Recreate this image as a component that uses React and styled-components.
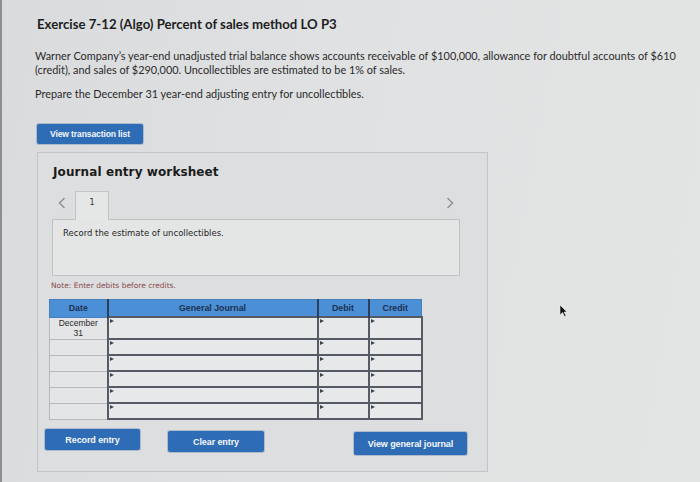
import React from "react";
import styled, { createGlobalStyle } from "styled-components";

const Global = createGlobalStyle`
  html, body { margin: 0; padding: 0; }
  body {
    width: 700px;
    height: 482px;
    overflow: hidden;
    background: linear-gradient(100deg, #d9dbdc 0%, #dfe1e2 45%, #e3e5e5 100%);
    font-family: "Lato", "Liberation Sans", sans-serif;
  }
`;

const Page = styled.div`
  position: relative;
  height: 482px;
  box-sizing: border-box;
  padding: 15px 0 0 33px;
  border-left: 2px solid #8d8f91;
`;

const Title = styled.h1`
  margin: 0 0 0 2px;
  font-family: "Lato", sans-serif;
  font-weight: 700;
  font-size: 13.2px;
  line-height: 18px;
  color: #1e1e1e;
`;

const Para = styled.p`
  margin: ${(p) => p.$top}px 0 0 0;
  width: 650px;
  font-family: "Lato", sans-serif;
  font-size: 10.9px;
  line-height: 14px;
  color: #2b2b2b;
`;

const BlueButton = styled.button`
  display: flex;
  align-items: center;
  justify-content: center;
  width: ${(p) => p.$w}px;
  height: ${(p) => p.$h || 21}px;
  margin: ${(p) => p.$m || "0"};
  padding: 0;
  border: none;
  border-radius: 2px;
  background: #2f6cb6;
  color: #f4f7fb;
  font-family: "Liberation Sans", Arial, sans-serif;
  font-weight: 700;
  font-size: ${(p) => p.$fs || 9}px;
  letter-spacing: -0.1px;
  box-shadow: 0 0 0 1px rgba(40, 80, 140, 0.25);
`;

const Panel = styled.section`
  width: 451px;
  height: 320px;
  box-sizing: border-box;
  margin: 8px 0 0 2px;
  padding: 11px 20px 0 12px;
  border: 1px solid #c3c5c6;
  background: #dcdedf;
  display: flex;
  flex-direction: column;
`;

const Heading = styled.h2`
  margin: 0 0 0 3px;
  font-family: "DejaVu Sans", Verdana, sans-serif;
  font-weight: 700;
  font-size: 12px;
  line-height: 16px;
  letter-spacing: 0.1px;
  color: #1b1b1b;
`;

const TabRow = styled.div`
  display: flex;
  align-items: flex-end;
  margin: 10px 0 0 2px;
  width: 408px;
  height: 29px;
`;

const Arrow = styled.span`
  display: flex;
  align-items: center;
  height: 22px;
  width: 14px;
  margin: ${(p) => p.$m};
  color: #8a8c8f;
  align-self: flex-start;
  margin-top: 2px;
`;

const Tab = styled.div`
  width: 34px;
  height: 29px;
  box-sizing: border-box;
  border: 1px solid #c2c4c5;
  border-bottom: none;
  background: #e5e7e7;
  display: flex;
  justify-content: center;
  padding-top: 6px;
  font-family: "DejaVu Sans", Verdana, sans-serif;
  font-size: 8px;
  color: #333;
  margin-left: 3px;
  position: relative;
  z-index: 1;
  margin-bottom: -1px;
`;

const InfoBox = styled.div`
  margin-left: 2px;
  width: 408px;
  height: 57px;
  box-sizing: border-box;
  border: 1px solid #bfc1c2;
  background: #e4e6e6;
  padding: 8px 10px;
  font-family: "DejaVu Sans", Verdana, sans-serif;
  font-size: 8.5px;
  color: #262626;
`;

const Note = styled.div`
  margin: 5px 0 0 1px;
  font-family: "DejaVu Sans", Verdana, sans-serif;
  font-size: 7.5px;
  color: #8a4b4b;
`;

const Table = styled.table`
  margin: 9px 0 0 -1px;
  border-collapse: collapse;
  table-layout: fixed;
  width: 372px;
`;

const Th = styled.th`
  height: 16px;
  padding: 0;
  background: #4b8fd6;
  border: 1px solid #4a7fbf;
  border-left: ${(p) => (p.$sep ? "2px solid #2b3f5c" : "1px solid #4a7fbf")};
  font-family: "Liberation Sans", Arial, sans-serif;
  font-size: 8.8px;
  font-weight: 700;
  color: #1c3150;
  text-align: center;
`;

const DateCell = styled.td`
  height: ${(p) => p.$h}px;
  padding: 0;
  border: 1px solid #b6b8ba;
  background: #e3e5e6;
  font-family: "Liberation Sans", Arial, sans-serif;
  font-size: 8.5px;
  line-height: 10px;
  color: #2a2a2a;
  text-align: center;
`;

const InputCell = styled.td`
  position: relative;
  height: ${(p) => p.$h}px;
  padding: 0;
  border: 2px solid #545b64;
  background: #e6e8e9;
  &::before {
    content: "";
    position: absolute;
    left: 1px;
    top: 1px;
    border-left: 4px solid #3a4450;
    border-top: 2px solid transparent;
    border-bottom: 2px solid transparent;
  }
`;

const ButtonRow = styled.div`
  display: flex;
  align-items: flex-start;
  margin: 9px 0 0 -5px;
`;

const Cursor = styled.svg`
  position: absolute;
  left: 557px;
  top: 304px;
`;

const rows = [20, 14, 14, 14, 14, 14];

export default function App() {
  return (
    <>
      <Global />
      <Page>
        <Title>Exercise 7-12 (Algo) Percent of sales method LO P3</Title>
        <Para $top={16}>
          Warner Company’s year-end unadjusted trial balance shows accounts receivable of $100,000, allowance for doubtful accounts of $610
          (credit), and sales of $290,000. Uncollectibles are estimated to be 1% of sales.
        </Para>
        <Para $top={10}>Prepare the December 31 year-end adjusting entry for uncollectibles.</Para>
        <BlueButton $w={106} $h={20} $m="23px 0 0 2px" $fs={8.5}>
          View transaction list
        </BlueButton>
        <Panel>
          <Heading>Journal entry worksheet</Heading>
          <TabRow>
            <Arrow $m="0 0 0 6px">
              <svg width="8" height="12" viewBox="0 0 8 12">
                <path d="M6.5 1 L1.5 6 L6.5 11" fill="none" stroke="#8a8c8f" strokeWidth="1.3" />
              </svg>
            </Arrow>
            <Tab>1</Tab>
            <Arrow $m="0 0 0 auto">
              <svg width="8" height="12" viewBox="0 0 8 12">
                <path d="M1.5 1 L6.5 6 L1.5 11" fill="none" stroke="#8a8c8f" strokeWidth="1.3" />
              </svg>
            </Arrow>
          </TabRow>
          <InfoBox>Record the estimate of uncollectibles.</InfoBox>
          <Note>Note: Enter debits before credits.</Note>
          <Table>
            <colgroup>
              <col style={{ width: 58 }} />
              <col style={{ width: 210 }} />
              <col style={{ width: 51 }} />
              <col style={{ width: 53 }} />
            </colgroup>
            <thead>
              <tr>
                <Th>Date</Th>
                <Th $sep>General Journal</Th>
                <Th $sep>Debit</Th>
                <Th $sep>Credit</Th>
              </tr>
            </thead>
            <tbody>
              {rows.map((h, i) => (
                <tr key={i}>
                  <DateCell $h={h}>
                    {i === 0 ? (
                      <>
                        December
                        <br />
                        31
                      </>
                    ) : null}
                  </DateCell>
                  <InputCell $h={h} />
                  <InputCell $h={h} />
                  <InputCell $h={h} />
                </tr>
              ))}
            </tbody>
          </Table>
          <ButtonRow>
            <BlueButton $w={95} $h={21}>Record entry</BlueButton>
            <BlueButton $w={96} $h={21} $m="2px 0 0 28px">Clear entry</BlueButton>
            <BlueButton $w={113} $h={23} $m="3px 0 0 auto">View general journal</BlueButton>
          </ButtonRow>
        </Panel>
        <Cursor width="9" height="13" viewBox="0 0 9 13">
          <path d="M1 1 L1 11 L3.5 8.5 L5.5 12.5 L7 11.8 L5 8 L8 8 Z" fill="#111" stroke="#eee" strokeWidth="0.6" />
        </Cursor>
      </Page>
    </>
  );
}
